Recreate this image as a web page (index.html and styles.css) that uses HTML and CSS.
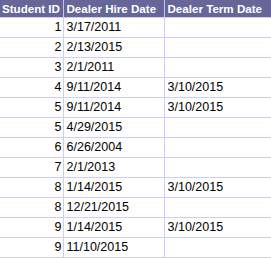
FILE: index.html
```html
<!DOCTYPE html>
<html>
<head>
<meta charset="utf-8">
<link rel="stylesheet" href="styles.css">
</head>
<body>
<table class="grid">
  <colgroup>
    <col class="c-id">
    <col class="c-hire">
    <col class="c-term">
  </colgroup>
  <thead>
    <tr><th class="num-h">Student ID</th><th>Dealer Hire Date</th><th>Dealer Term Date</th></tr>
  </thead>
  <tbody>
    <tr><td class="num">1</td><td>3/17/2011</td><td></td></tr>
    <tr><td class="num">2</td><td>2/13/2015</td><td></td></tr>
    <tr><td class="num">3</td><td>2/1/2011</td><td></td></tr>
    <tr><td class="num">4</td><td>9/11/2014</td><td>3/10/2015</td></tr>
    <tr><td class="num">5</td><td>9/11/2014</td><td>3/10/2015</td></tr>
    <tr><td class="num">5</td><td>4/29/2015</td><td></td></tr>
    <tr><td class="num">6</td><td>6/26/2004</td><td></td></tr>
    <tr><td class="num">7</td><td>2/1/2013</td><td></td></tr>
    <tr><td class="num">8</td><td>1/14/2015</td><td>3/10/2015</td></tr>
    <tr><td class="num">8</td><td>12/21/2015</td><td></td></tr>
    <tr><td class="num">9</td><td>1/14/2015</td><td>3/10/2015</td></tr>
    <tr><td class="num">9</td><td>11/10/2015</td><td></td></tr>
  </tbody>
</table>
</body>
</html>
```

FILE: styles.css
```css
html, body {
  margin: 0;
  padding: 0;
  background: #ffffff;
}

.grid {
  border-collapse: collapse;
  table-layout: fixed;
  width: 271px;
  font-family: "Liberation Sans", Arial, sans-serif;
  font-size: 12.5px;
  color: #000000;
}

.c-id { width: 63px; }
.c-hire { width: 101px; }
.c-term { width: 107px; }

.grid th {
  background: #666699;
  color: #ffffff;
  font-weight: bold;
  font-size: 11.6px;
  text-align: left;
  height: 17px;
  padding: 0 0 0 3px;
  border-right: 1px solid #c4c4ec;
  border-bottom: 1px solid #ccccff;
  white-space: nowrap;
  line-height: 17px;
  box-sizing: border-box;
}

.grid th.num-h {
  padding-left: 2px;
}

.grid td {
  height: 20px;
  padding: 0 0 0 3px;
  border-right: 1px solid #ccccff;
  border-bottom: 1px solid #ccccff;
  white-space: nowrap;
  line-height: 19px;
  box-sizing: border-box;
}

.grid td.num {
  text-align: right;
  padding: 0 1px 0 0;
}
```
